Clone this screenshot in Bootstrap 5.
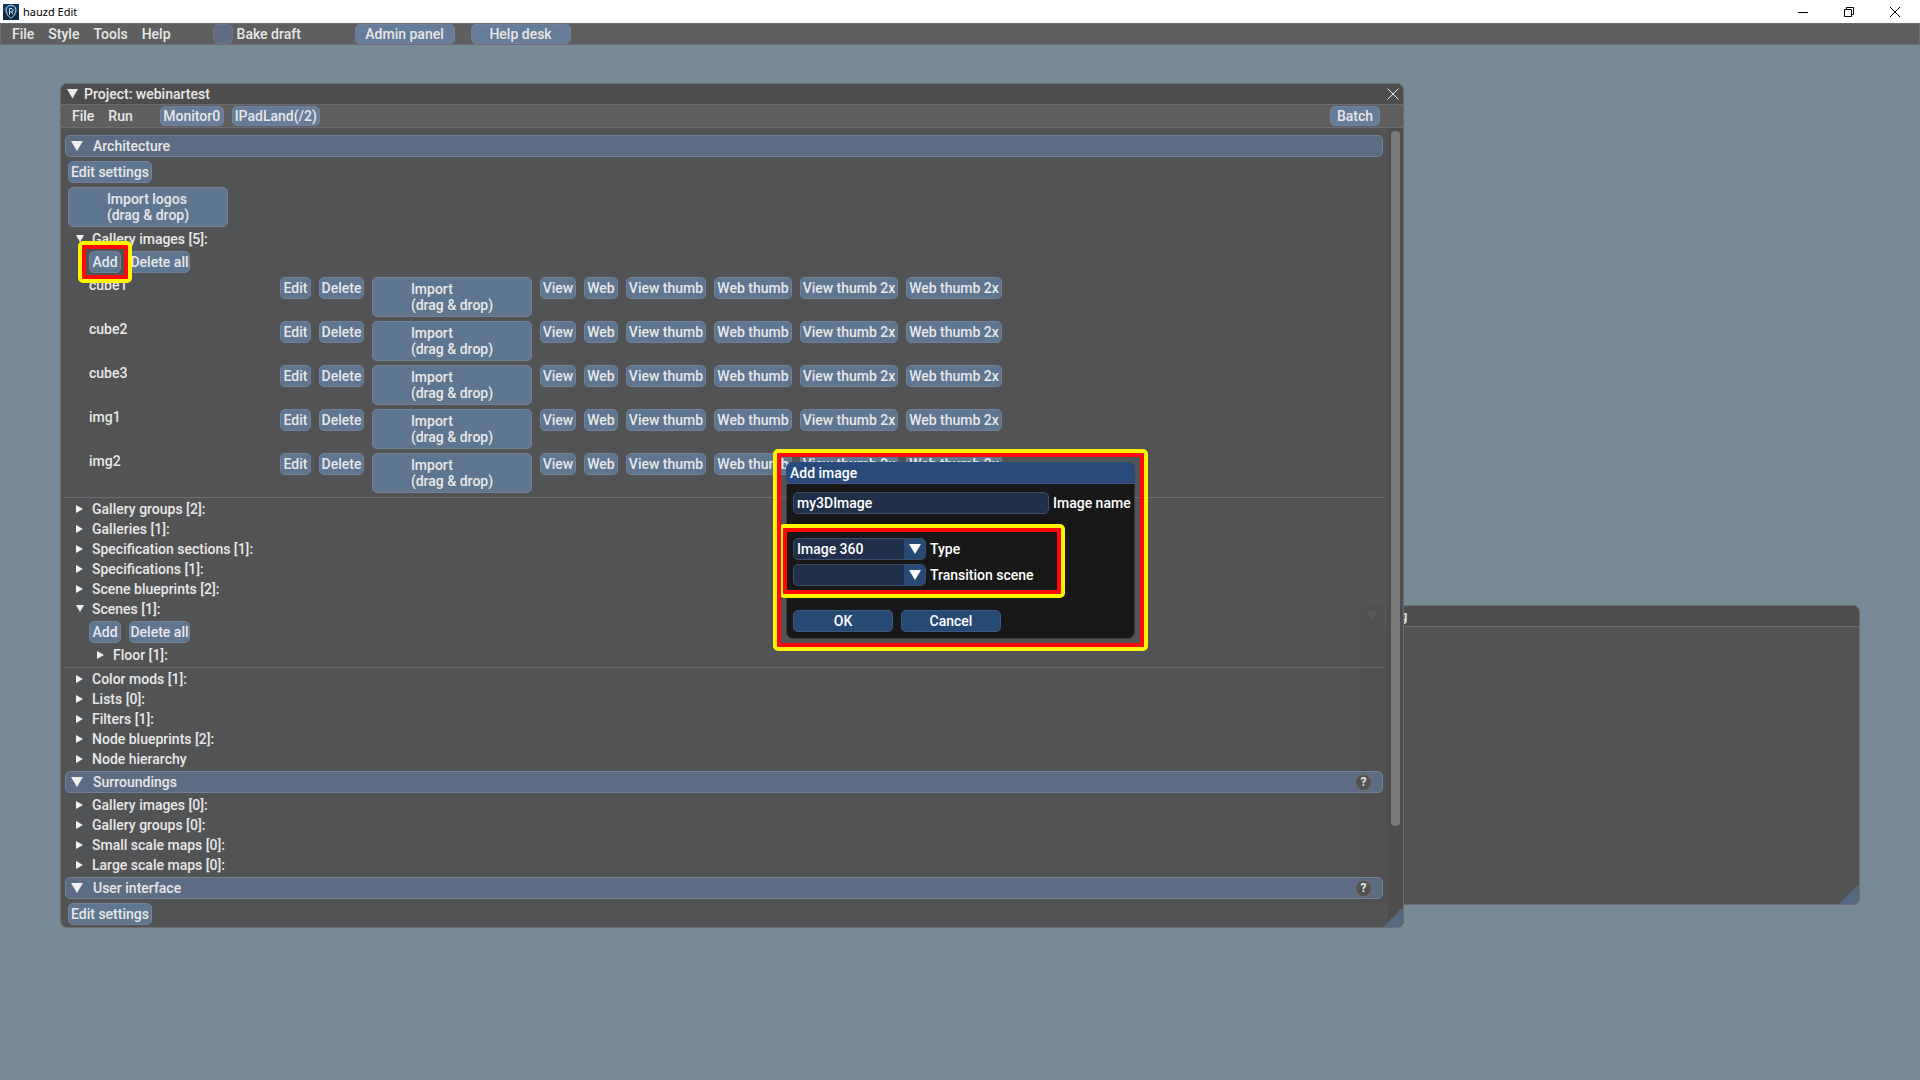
<!DOCTYPE html>
<html lang="en">
<head>
<meta charset="utf-8">
<meta name="viewport" content="width=device-width, initial-scale=1">
<title>hauzd Edit</title>
<link rel="stylesheet" href="https://cdn.jsdelivr.net/npm/bootstrap@5.3.0/dist/css/bootstrap.min.css">
<style>
  :root { --edge: #6c6c74; --ctl: #5f7690; --ctl-edge: #73809a; --ink: #e8e8e8; }
  body { font-family: Roboto, "Liberation Sans", sans-serif; font-size: 14px; font-weight: 500; line-height: 16px; color: var(--ink); background: #768b95; }
  label { white-space: nowrap; }

  /* Application frame */
  .app-title { height: 23px; padding: 0 2px 0 3px; background: #fff; color: #000; font-family: "Noto Sans", "Open Sans", sans-serif; font-size: 11px; font-weight: 400; }
  .caption-btn { width: 46px; height: 22px; border: 0; padding: 0 0 2px; background: none; color: #000; }
  .menu-strip { height: 22px; background: #5f5f5f; border: 1px solid var(--edge); }
  .menu-strip a { color: var(--ink); text-decoration: none; }
  .app-menu { padding-left: 11px; gap: 14px; }
  .bake { width: 142px; margin-left: 28px; }
  .bake-box.form-check-input { width: 20px; height: 20px; margin: 0; border-radius: 5px; background-color: #606c80; border-color: #6c7688; }

  /* Buttons */
  .btn-im { --bs-btn-font-size: 14px; --bs-btn-font-weight: 500; --bs-btn-line-height: 16px; --bs-btn-padding-x: 0; --bs-btn-padding-y: 2px;
    --bs-btn-color: var(--ink); --bs-btn-bg: var(--ctl); --bs-btn-border-color: var(--ctl-edge); --bs-btn-border-radius: 5px;
    --bs-btn-hover-color: #fff; --bs-btn-hover-bg: #6a86a6; --bs-btn-hover-border-color: var(--ctl-edge); white-space: nowrap; }
  .menu-strip .btn-im { --bs-btn-padding-y: 1px; --bs-btn-bg: #657d99; }
  .btn-wide { width: 100px; }
  .btn-batch { width: 50px; margin-right: 23px; }
  .btn-settings { width: 84px; }
  .btn-add { width: 32px; }
  .btn-all { width: 61px; }
  .btn-monitor { width: 64px; margin-left: 24px; }
  .btn-pad { width: 88px; }
  .btn-drop { width: 160px; height: 40px; display: flex; justify-content: center; align-items: center; text-align: left; }

  /* Windows */
  .im-window { border: 1px solid var(--edge); border-radius: 7px; overflow: hidden; }
  .im-title { height: 21px; padding: 0 4px 0 6px; gap: 5px; background: #4d4d4d; border-bottom: 1px solid var(--edge); }
  .project-win { left: 60px; top: 83px; width: 1344px; height: 845px; background: rgba(80, 80, 81, .95); z-index: 2; }
  .project-win .menu-strip { height: 23px; border-width: 0 0 1px; }
  .win-item { margin-left: 11px; margin-right: 3px; }
  .log-win { left: 1360px; top: 605px; width: 500px; height: 300px; background: #525355; z-index: 1; }
  .grip { right: 0; bottom: 0; width: 20px; height: 20px; background: #576a80; clip-path: polygon(100% 0, 100% 100%, 0 100%); }
  .scroll-track { width: 15px; padding: 3px; background: #4d4d4d; }
  .scroll-thumb { width: 9px; height: 695px; border-radius: 4px; background: #7a7a7a; }

  /* Project tree */
  .stack { gap: 4px; }
  .win-body { padding: 7px 5px 0 4px; }
  .fold { height: 22px; padding: 0 10px 0 5px; border: 1px solid var(--ctl-edge); border-radius: 5px; background: #5c6c82; }
  .fold-arrow { margin-right: 10px; }
  .help-dot { width: 17px; height: 17px; border: 1px solid #70706f; border-radius: 50%; padding: 0; background: #525252; color: var(--ink); font-size: 12px; font-weight: 700; line-height: 14px; }
  .indent { padding-left: 3px; }
  .sub-indent { padding-left: 24px; }
  .node { height: 16px; padding-left: 10px; gap: 7px; }
  .node svg { width: 10px; height: 10px; flex: none; }
  .floor-node { padding-left: 31px; }
  .rule { height: 1px; margin: 0 -1px; background: #6c6c6e; }
  .after-rule { margin-top: -1px; }
  .img-name { width: 191px; }
  .img-actions { display: grid; grid-template-columns: 31px 45px 160px 36px 34px 80px 78px 98px 96px; gap: 8px; align-items: start; }

  /* Callout frames */
  .spot { position: relative; }
  .spot::after { content: ""; position: absolute; inset: var(--out); border: 4px solid #fff500; border-radius: 5px; box-shadow: inset 0 0 0 4px #ff0808; pointer-events: none; z-index: 3; }
  .spot-add { --out: -10px -11px; }
  .spot-dialog { --out: -14px -14px -13px; }
  .spot-combos { --out: -14px -16px -12px -14px; }

  /* Dialog */
  .add-dialog { left: 786px; top: 462px; width: 349px; z-index: 5; }
  .dialog-box { border: 1px solid #3a3a42; border-radius: 7px; background: #181818; color: #fff; }
  .dialog-title { height: 22px; padding: 0 4px; margin: -1px -1px 0; background: #294a7a; border-bottom: 1px solid #45557a; border-radius: 7px 7px 0 0; }
  .dialog-body { padding: 8px 6px 6px; }
  .im-field { height: 22px; padding: 2px 3px; border: 1px solid #3d4d6c; border-radius: 5px; font: inherit; color: #fff; background: #20304a; }
  .name-field { width: 256px; flex: none; }
  .combo { width: 133px; }
  .combo select { width: 100%; appearance: none; background: linear-gradient(to left, #274a75 21px, #20304a 21px); }
  .combo svg { right: 5px; top: 6px; width: 12px; height: 10px; pointer-events: none; }
  .combos { width: 256px; margin: 24px 0; }
  .dialog-box .btn-im { --bs-btn-color: #fff; --bs-btn-bg: #274a75; --bs-btn-border-color: #3f5680; }
</style>
</head>
<body class="vh-100 overflow-hidden">
<header>
  <div class="app-title d-flex align-items-center">
    <svg class="me-1" width="16" height="16" viewBox="0 0 16 16" aria-hidden="true"><rect width="16" height="16" fill="#0d3a5c"/><path d="M0 9h16v7H0z" fill="#0c2740"/><path d="M8 14.500 4.500 11 3 6.500 3.500 3.500 6 1.700h4l2.500 1.800.5 3L11.500 11z" fill="none" stroke="#c4dbe8"/><path d="M6.500 11V4.500H9l1 1V7L9 8H6.500M8.500 8l1.500 2.500" fill="none" stroke="#c4dbe8"/></svg>
    <span>hauzd Edit</span>
    <div class="ms-auto d-flex">
      <button class="caption-btn" aria-label="Minimize"><svg width="10" height="10" viewBox="0 0 10 10"><path d="M0 5.500h10" stroke="#000"/></svg></button>
      <button class="caption-btn" aria-label="Restore"><svg width="10" height="10" viewBox="0 0 10 10" fill="none" stroke="#000"><path d="M.5 2.500h7v7h-7zM2.500 2.500v-2h7v7h-2"/></svg></button>
      <button class="caption-btn" aria-label="Close"><svg width="10" height="10" viewBox="0 0 10 10"><path d="M0 0l10 10M10 0 0 10" stroke="#000"/></svg></button>
    </div>
  </div>
  <nav class="menu-strip app-menu d-flex align-items-center">
    <a href="#">File</a><a href="#">Style</a><a href="#">Tools</a><a href="#">Help</a>
    <div class="d-flex align-items-center">
      <div class="bake d-flex align-items-center gap-1"><input class="form-check-input bake-box" type="checkbox" id="bake"><label for="bake">Bake draft</label></div>
      <button class="btn btn-im btn-wide">Admin panel</button>
      <button class="btn btn-im btn-wide ms-3">Help desk</button>
    </div>
  </nav>
</header>

<section class="im-window log-win position-absolute" aria-label="Log">
  <div class="im-title d-flex align-items-center"><svg width="12" height="10"><path d="M0 0h11L5.500 9.500z" fill="#e8e8e8"/></svg>Log</div>
  <div class="grip position-absolute"></div>
</section>

<main class="im-window project-win position-absolute d-flex flex-column">
  <div class="im-title d-flex align-items-center"><svg width="12" height="10"><path d="M0 0h11L5.500 9.500z" fill="#e8e8e8"/></svg>Project: webinartest
    <button class="ms-auto border-0 bg-transparent p-0 d-flex" aria-label="Close project"><svg width="12" height="12"><path d="M.5.5l11 11M11.500.5l-11 11" stroke="#e8e8e8" fill="none"/></svg></button>
  </div>
  <nav class="menu-strip d-flex align-items-center">
    <a class="win-item" href="#">File</a><a class="win-item" href="#">Run</a>
    <button class="btn btn-im btn-monitor">Monitor0</button><button class="btn btn-im btn-pad ms-2">IPadLand(/2)</button>
    <button class="btn btn-im btn-batch ms-auto">Batch</button>
  </nav>
  <div class="d-flex flex-fill">
    <div class="win-body flex-fill d-flex flex-column stack">
      <div class="fold d-flex align-items-center"><svg class="fold-arrow" width="12" height="10"><path d="M0 0h12L6 10z" fill="#f0f0f0"/></svg>Architecture</div>
      <div class="indent d-flex"><button class="btn btn-im btn-settings">Edit settings</button></div>
      <div class="indent d-flex"><button class="btn btn-im btn-drop"><span>Import logos<br>(drag &amp; drop)</span></button></div>
      <div class="node d-flex align-items-center" data-open>Gallery images [5]:</div>
      <div class="sub-indent d-flex gap-2"><span class="spot spot-add d-flex"><button class="btn btn-im btn-add">Add</button></span><button class="btn btn-im btn-all">Delete all</button></div>
      <div id="images" class="d-flex flex-column stack"></div>
      <div class="rule"></div>
      <div class="node after-rule d-flex align-items-center">Gallery groups [2]:</div>
      <div class="node d-flex align-items-center">Galleries [1]:</div>
      <div class="node d-flex align-items-center">Specification sections [1]:</div>
      <div class="node d-flex align-items-center">Specifications [1]:</div>
      <div class="node d-flex align-items-center">Scene blueprints [2]:</div>
      <div class="node d-flex align-items-center" data-open>Scenes [1]:</div>
      <div class="sub-indent d-flex gap-2"><button class="btn btn-im btn-add">Add</button><button class="btn btn-im btn-all">Delete all</button></div>
      <div class="node floor-node d-flex align-items-center">Floor [1]:</div>
      <div class="rule"></div>
      <div class="node after-rule d-flex align-items-center">Color mods [1]:</div>
      <div class="node d-flex align-items-center">Lists [0]:</div>
      <div class="node d-flex align-items-center">Filters [1]:</div>
      <div class="node d-flex align-items-center">Node blueprints [2]:</div>
      <div class="node d-flex align-items-center">Node hierarchy</div>
      <div class="fold d-flex align-items-center"><svg class="fold-arrow" width="12" height="10"><path d="M0 0h12L6 10z" fill="#f0f0f0"/></svg>Surroundings<button class="help-dot ms-auto">?</button></div>
      <div class="node d-flex align-items-center">Gallery images [0]:</div>
      <div class="node d-flex align-items-center">Gallery groups [0]:</div>
      <div class="node d-flex align-items-center">Small scale maps [0]:</div>
      <div class="node d-flex align-items-center">Large scale maps [0]:</div>
      <div class="fold d-flex align-items-center"><svg class="fold-arrow" width="12" height="10"><path d="M0 0h12L6 10z" fill="#f0f0f0"/></svg>User interface<button class="help-dot ms-auto">?</button></div>
      <div class="indent d-flex"><button class="btn btn-im btn-settings">Edit settings</button></div>
    </div>
    <div class="scroll-track"><div class="scroll-thumb"></div></div>
  </div>
  <div class="grip position-absolute"></div>
</main>

<div class="add-dialog position-absolute" role="dialog" aria-label="Add image">
  <div class="dialog-box spot spot-dialog">
    <div class="dialog-title d-flex align-items-center">Add image</div>
    <form class="dialog-body">
      <div class="d-flex align-items-center gap-1"><input class="im-field name-field" id="iname" type="text" value="my3DImage"><label for="iname">Image name</label></div>
      <div class="combos spot spot-combos d-flex flex-column stack">
        <div class="d-flex align-items-center gap-1"><div class="combo position-relative d-flex"><select class="im-field" id="itype"><option>Image 360</option></select><svg class="position-absolute" viewBox="0 0 12 10"><path d="M0 0h12L6 10z" fill="#fff"/></svg></div><label for="itype">Type</label></div>
        <div class="d-flex align-items-center gap-1"><div class="combo position-relative d-flex"><select class="im-field" id="iscene"><option></option></select><svg class="position-absolute" viewBox="0 0 12 10"><path d="M0 0h12L6 10z" fill="#fff"/></svg></div><label for="iscene">Transition scene</label></div>
      </div>
      <div class="d-flex gap-2"><button type="button" class="btn btn-im btn-wide">OK</button><button type="button" class="btn btn-im btn-wide">Cancel</button></div>
    </form>
  </div>
</div>

<script src="https://cdn.jsdelivr.net/npm/bootstrap@5.3.0/dist/js/bootstrap.bundle.min.js"></script>
<script>
  // One row of actions for every gallery image
  document.getElementById('images').innerHTML = ['cube1', 'cube2', 'cube3', 'img1', 'img2'].map(name =>
    `<div class="sub-indent d-flex align-items-start"><span class="img-name">${name}</span><div class="img-actions">` +
    ['Edit', 'Delete', 'Import', 'View', 'Web', 'View thumb', 'Web thumb', 'View thumb 2x', 'Web thumb 2x'].map(t =>
      t === 'Import' ? '<button class="btn btn-im btn-drop"><span>Import<br>(drag &amp; drop)</span></button>' : `<button class="btn btn-im">${t}</button>`).join('') +
    '</div></div>').join('');
  // Arrow in front of every tree node
  document.querySelectorAll('.node').forEach(n => n.insertAdjacentHTML('afterbegin',
    `<svg viewBox="0 0 10 10"><path d="${'open' in n.dataset ? 'M1 1h8L5 8z' : 'M1 1v8l7-4z'}" fill="#f0f0f0"/></svg>`));
</script>
</body>
</html>
